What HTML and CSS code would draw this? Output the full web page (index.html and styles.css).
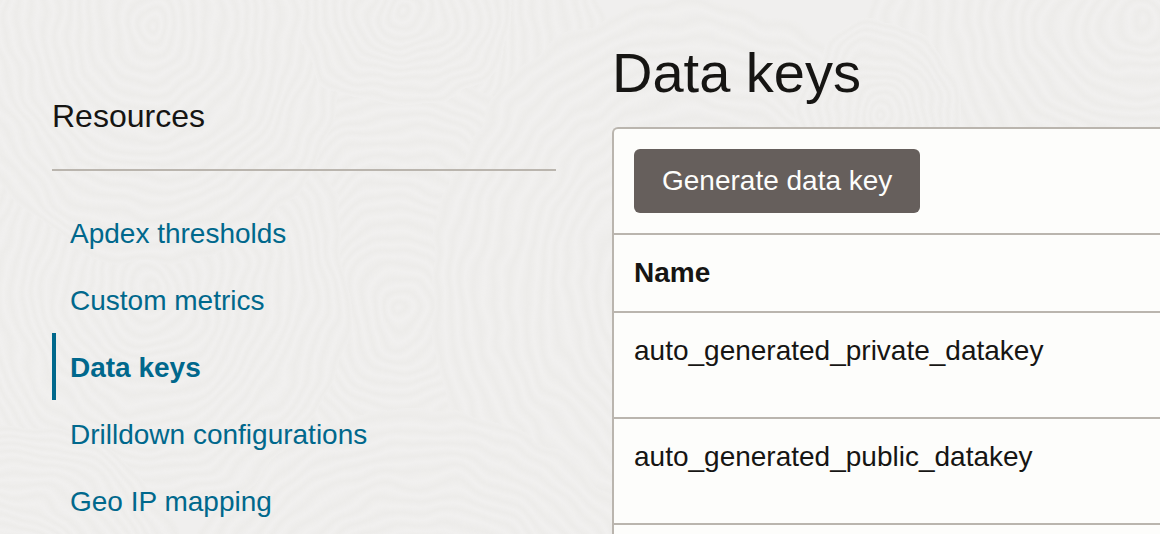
FILE: index.html
```html
<!DOCTYPE html>
<html lang="en">
<head>
<meta charset="utf-8">
<meta name="viewport" content="width=device-width, initial-scale=1">
<title>Data keys</title>
<link rel="stylesheet" href="styles.css">
</head>
<body>
<svg class="backdrop" viewBox="0 0 1160 534" preserveAspectRatio="xMinYMin slice" aria-hidden="true">
  <defs>
    <filter id="hand-drawn" x="0" y="0" width="1160" height="534" filterUnits="userSpaceOnUse">
      <feTurbulence type="fractalNoise" baseFrequency="0.018" numOctaves="2" seed="4" result="noise"/>
      <feDisplacementMap in="SourceGraphic" in2="noise" scale="26" xChannelSelector="R" yChannelSelector="G"/>
    </filter>
    <radialGradient id="rings-large" r="0.028" spreadMethod="repeat">
      <stop offset="0" stop-color="#f1f0ef"/>
      <stop offset="0.5" stop-color="#edecea"/>
      <stop offset="1" stop-color="#f1f0ef"/>
    </radialGradient>
    <radialGradient id="rings-small" r="0.05" spreadMethod="repeat">
      <stop offset="0" stop-color="#f1f0ef"/>
      <stop offset="0.5" stop-color="#edecea"/>
      <stop offset="1" stop-color="#f1f0ef"/>
    </radialGradient>
  </defs>
  <g filter="url(#hand-drawn)">
    <g fill="url(#rings-large)">
      <ellipse cx="400" cy="40" rx="200" ry="240"/>
      <ellipse cx="400" cy="310" rx="200" ry="240"/>
      <ellipse cx="690" cy="290" rx="260" ry="290"/>
      <ellipse cx="420" cy="650" rx="250" ry="240"/>
      <ellipse cx="150" cy="290" rx="200" ry="220"/>
      <ellipse cx="1140" cy="25" rx="270" ry="230"/>
      <ellipse cx="150" cy="25" rx="200" ry="240"/>
      <ellipse cx="10" cy="600" rx="180" ry="180"/>
    </g>
    <g fill="url(#rings-small)">
      <ellipse cx="405" cy="15" rx="110" ry="90"/>
      <ellipse cx="880" cy="115" rx="80" ry="90"/>
    </g>
  </g>
</svg>
<div class="page">
  <aside class="sidebar">
    <h2 class="sidebar-title">Resources</h2>
    <nav class="resource-nav" aria-label="Resources">
      <a class="resource-link" href="#apdex">Apdex thresholds</a>
      <a class="resource-link" href="#metrics">Custom metrics</a>
      <a class="resource-link is-active" href="#keys" aria-current="page">Data keys</a>
      <a class="resource-link" href="#drilldown">Drilldown configurations</a>
      <a class="resource-link" href="#geo">Geo IP mapping</a>
    </nav>
  </aside>
  <main class="content">
    <h1 class="content-title">Data keys</h1>
    <section class="panel">
      <div class="toolbar">
        <button class="button" type="button">Generate data key</button>
      </div>
      <table class="key-table">
        <thead>
          <tr><th scope="col">Name</th></tr>
        </thead>
        <tbody>
          <tr><td>auto_generated_private_datakey</td></tr>
          <tr><td>auto_generated_public_datakey</td></tr>
          <tr><td></td></tr>
        </tbody>
      </table>
    </section>
  </main>
</div>
</body>
</html>
```
FILE: styles.css
```css
* {
  box-sizing: border-box;
}

html {
  height: 100%;
  overflow: hidden;
}

body {
  margin: 0;
  height: 100%;
  overflow: hidden;
  background: #f0efee;
  color: #161513;
  font-family: "Liberation Sans", Arial, sans-serif;
  font-size: 28px;
  line-height: 34px;
}

.backdrop {
  position: absolute;
  inset: 0;
  z-index: -1;
  width: 100%;
  height: 100%;
}

.page {
  display: grid;
  grid-template-columns: 504px minmax(0, 1fr);
  gap: 56px;
  padding-left: 52px;
}

.sidebar {
  padding-top: 96px;
}

.sidebar-title {
  margin: 0;
  padding-bottom: 33px;
  border-bottom: 2px solid #bab5ae;
  font-size: 32px;
  font-weight: 400;
  line-height: 40px;
}

.resource-nav {
  display: flex;
  flex-direction: column;
  padding-top: 28px;
}

.resource-link {
  padding: 18px 14px 15px;
  border-left: 4px solid transparent;
  color: #00688c;
  text-decoration: none;
}

.resource-link.is-active {
  border-left-color: #00688c;
  font-weight: 700;
}

.content {
  padding-top: 40px;
}

.content-title {
  margin: 0 0 21px;
  font-size: 56px;
  font-weight: 400;
  line-height: 66px;
}

.panel {
  border: 2px solid #bab5ae;
  border-right: 0;
  border-radius: 6px 0 0 0;
  background: #fdfdfb;
}

.toolbar {
  padding: 20px;
}

.button {
  height: 64px;
  padding: 0 28px;
  border: 0;
  border-radius: 6px;
  background: #665f5c;
  color: #fdfdfb;
  font: inherit;
}

.key-table {
  width: 100%;
  border-collapse: separate;
  border-spacing: 0;
}

.key-table th,
.key-table td {
  padding: 21px 20px;
  border-top: 2px solid #bab5ae;
  text-align: left;
  vertical-align: top;
}

.key-table td {
  height: 106px;
}
```
